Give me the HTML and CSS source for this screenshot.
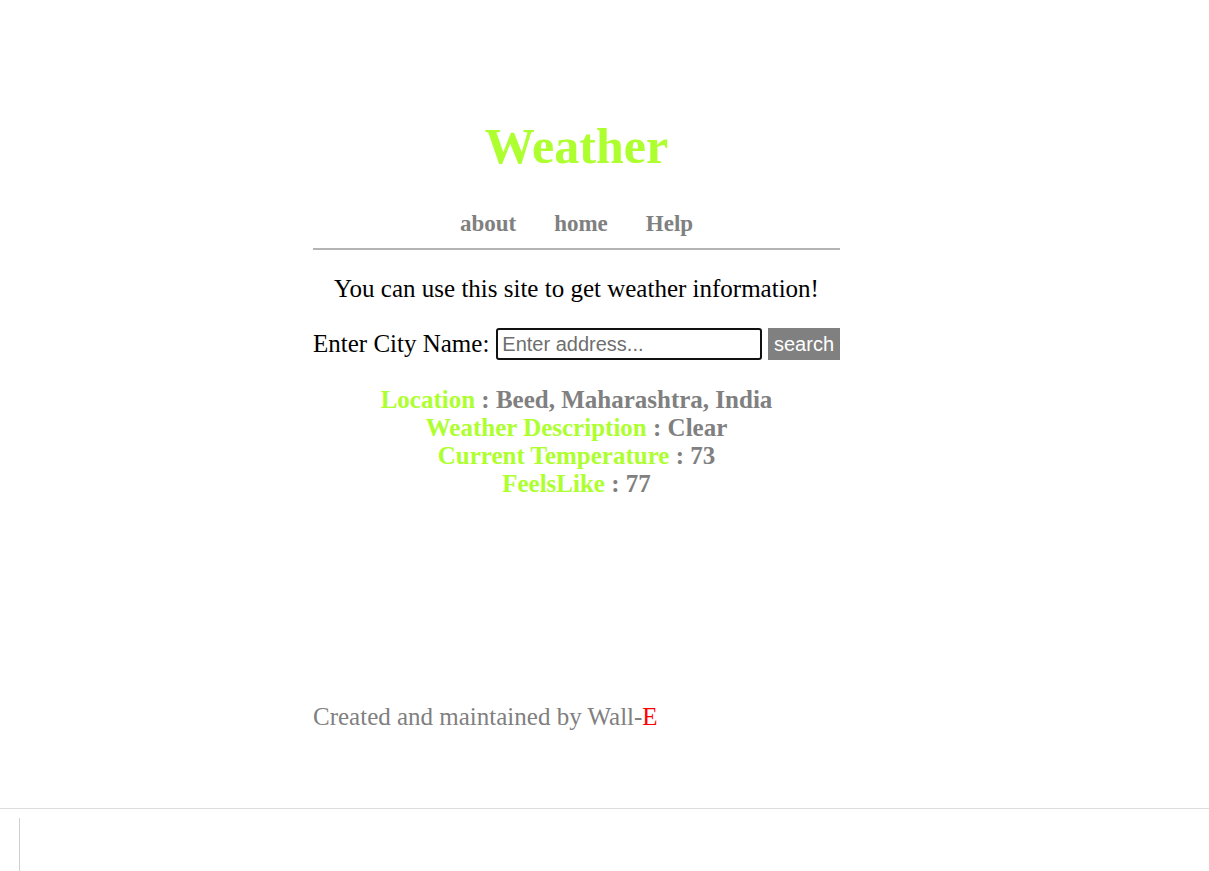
FILE: index.html
```html
<!DOCTYPE html>
<html>
<head>
<meta charset="utf-8">
<title>Weather</title>
<link rel="stylesheet" href="styles.css">
</head>
<body>
<div class="page">
  <div class="main">
    <header class="header">
      <h1 class="title">Weather</h1>
      <nav class="nav">
        <a class="nav-link" href="#">about</a>
        <a class="nav-link" href="#">home</a>
        <a class="nav-link" href="#">Help</a>
      </nav>
    </header>
    <p class="intro">You can use this site to get weather information!</p>
    <form class="search-form">
      <label class="search-label">Enter City Name:</label>
      <input class="search-input" type="text" placeholder="Enter address...">
      <button class="search-button" type="button">search</button>
    </form>
    <div class="results">
      <div class="result-row"><span class="label">Location</span> : Beed, Maharashtra, India</div>
      <div class="result-row"><span class="label">Weather Description</span> : Clear</div>
      <div class="result-row"><span class="label">Current Temperature</span> : 73</div>
      <div class="result-row"><span class="label">FeelsLike</span> : 77</div>
    </div>
    <footer class="footer">Created and maintained by Wall-<span class="red">E</span></footer>
  </div>
  <div class="bottom-bar">
    <div class="bottom-pane"></div>
  </div>
</div>
</body>
</html>
```
FILE: styles.css
```css
html, body {
  margin: 0;
  padding: 0;
  background: #fff;
}
body {
  font-family: "Liberation Serif", "Times New Roman", serif;
  color: #000;
}
.page {
  display: flex;
  flex-direction: column;
  height: 871px;
}
.main {
  width: 527px;
  margin-left: 313px;
  flex: 1;
  display: flex;
  flex-direction: column;
}
.header {
  padding-top: 116px;
  border-bottom: 2px solid #b4b4b4;
  padding-bottom: 11px;
}
.title {
  margin: 0;
  text-align: center;
  font-size: 50px;
  font-weight: bold;
  color: #adff2f;
  line-height: 60px;
}
.nav {
  display: flex;
  justify-content: center;
  gap: 38px;
  margin-top: 35px;
}
.nav-link {
  font-size: 23px;
  font-weight: bold;
  color: #808080;
  text-decoration: none;
  line-height: 26px;
}
.intro {
  margin: 25px 0 0 0;
  text-align: center;
  font-size: 25px;
  line-height: 28px;
}
.search-form {
  display: flex;
  align-items: center;
  margin-top: 25px;
  height: 32px;
}
.search-label {
  font-size: 25px;
  white-space: nowrap;
  flex: none;
  margin-right: 7px;
}
.search-input {
  box-sizing: border-box;
  flex: 1;
  min-width: 0;
  height: 32px;
  border: 2px solid #111;
  border-radius: 3px;
  padding: 0 4px;
  font-family: "Liberation Sans", Arial, sans-serif;
  font-size: 20px;
  outline: none;
}
.search-input::placeholder {
  color: #6e6e6e;
}
.search-button {
  box-sizing: border-box;
  flex: none;
  margin-left: 6px;
  width: 72px;
  height: 32px;
  border: none;
  background: #808080;
  color: #fff;
  font-family: "Liberation Sans", Arial, sans-serif;
  font-size: 20px;
  padding: 0;
}
.results {
  margin-top: 26px;
  text-align: center;
  font-size: 25px;
  font-weight: bold;
  color: #808080;
  line-height: 28px;
}
.label {
  color: #adff2f;
}
.footer {
  margin-top: auto;
  margin-bottom: 77px;
  font-size: 25px;
  color: #808080;
  line-height: 28px;
}
.red {
  color: red;
}
.bottom-bar {
  box-sizing: border-box;
  height: 63px;
  border-top: 1px solid #dcdcdc;
  display: flex;
  padding-top: 9px;
  padding-left: 19px;
}
.bottom-pane {
  border-left: 1px solid #d0d0d0;
  width: 0;
}
```
